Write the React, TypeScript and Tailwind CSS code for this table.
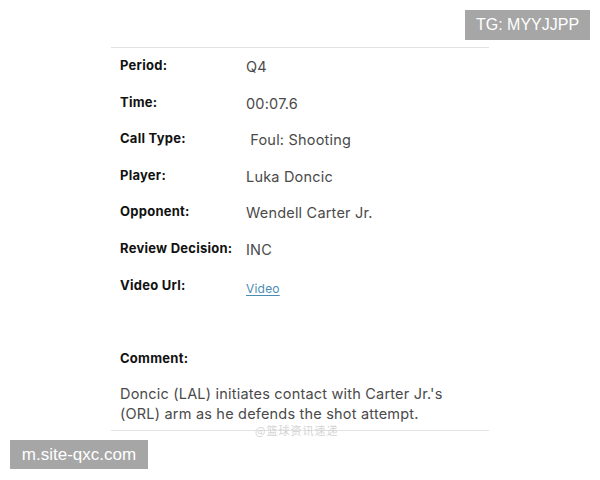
import React from 'react'

interface Row {
  label: string
  value: string
  link?: boolean
}

const rows: Row[] = [
  { label: 'Period:', value: 'Q4' },
  { label: 'Time:', value: '00:07.6' },
  { label: 'Call Type:', value: '\u00a0Foul: Shooting' },
  { label: 'Player:', value: 'Luka Doncic' },
  { label: 'Opponent:', value: 'Wendell Carter Jr.' },
  { label: 'Review Decision:', value: 'INC' },
  { label: 'Video Url:', value: 'Video', link: true },
]

const App: React.FC = () => {
  return (
    <div className="relative w-[600px] h-[480px] bg-white overflow-hidden font-['Inter',sans-serif]">
      <div className="absolute right-[10px] top-[10px] w-[125px] h-[30px] bg-[#a6a6a6] text-white text-[16px] flex items-center justify-center font-['Liberation_Sans',sans-serif]">
        TG: MYYJJPP
      </div>

      <div className="ml-[111px] w-[378px] pt-[47px]">
        <div className="border-t border-[#e2e2e2] pt-[7px] pl-[9px]">
          {rows.map((r) => (
            <div key={r.label} className="flex h-[36.6px]">
              <div className="w-[126px] text-[13px] leading-[20px] font-bold tracking-[0.25px] text-[#111]">
                {r.label}
              </div>
              {r.link ? (
                <a className="mt-[4px] text-[12px] leading-[20px] tracking-[0.2px] text-[#4a8db3] underline underline-offset-2">
                  {r.value}
                </a>
              ) : (
                <div className="mt-[2px] text-[14.5px] leading-[20px] tracking-[0.2px] text-[#4a4a4a]">{r.value}</div>
              )}
            </div>
          ))}
          <div className="mt-[37px] text-[13px] leading-[20px] font-bold tracking-[0.25px] text-[#111]">Comment:</div>
          <p className="mt-[16px] text-[14.5px] leading-[20px] tracking-[0.2px] text-[#4a4a4a]">
            Doncic (LAL) initiates contact with Carter Jr.'s
            <br />
            (ORL) arm as he defends the shot attempt.
          </p>
        </div>
        <div className="relative mt-[6px] border-t border-[#e2e2e2]">
          <span className="absolute left-[144px] -top-[8px] text-[11px] leading-[14px] tracking-[1px] text-[#d4d4d4] font-['Noto_Sans_CJK_SC',sans-serif]">
            @篮球资讯速递
          </span>
        </div>
      </div>

      <div className="absolute left-[10px] top-[440px] w-[138px] h-[29px] bg-[#a6a6a6] text-white text-[17px] flex items-center justify-center font-['Liberation_Sans',sans-serif]">
        m.site-qxc.com
      </div>
    </div>
  )
}

export default App
